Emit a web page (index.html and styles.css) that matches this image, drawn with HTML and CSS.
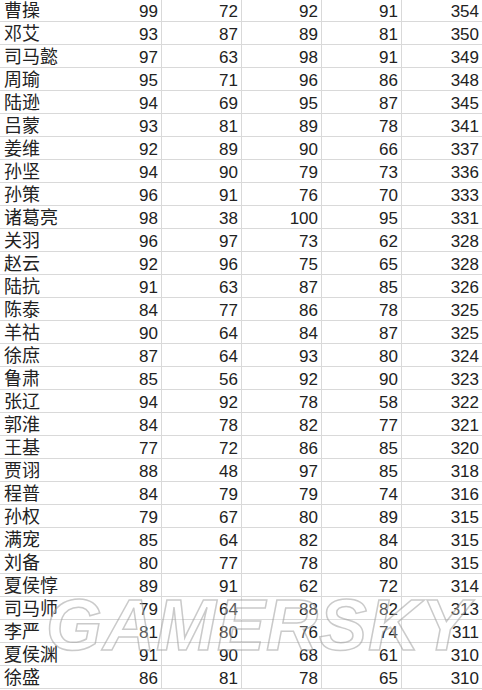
FILE: index.html
```html
<!DOCTYPE html>
<html lang="zh">
<head>
<meta charset="utf-8">
<title>武将数据</title>
<link rel="stylesheet" href="styles.css">
</head>
<body>
<div class="sheet">
  <div class="row first"><div class="name">曹操</div><div class="num">99</div><div class="num">72</div><div class="num">92</div><div class="num">91</div><div class="num last">354</div></div>
  <div class="row"><div class="name">邓艾</div><div class="num">93</div><div class="num">87</div><div class="num">89</div><div class="num">81</div><div class="num last">350</div></div>
  <div class="row"><div class="name">司马懿</div><div class="num">97</div><div class="num">63</div><div class="num">98</div><div class="num">91</div><div class="num last">349</div></div>
  <div class="row"><div class="name">周瑜</div><div class="num">95</div><div class="num">71</div><div class="num">96</div><div class="num">86</div><div class="num last">348</div></div>
  <div class="row"><div class="name">陆逊</div><div class="num">94</div><div class="num">69</div><div class="num">95</div><div class="num">87</div><div class="num last">345</div></div>
  <div class="row"><div class="name">吕蒙</div><div class="num">93</div><div class="num">81</div><div class="num">89</div><div class="num">78</div><div class="num last">341</div></div>
  <div class="row"><div class="name">姜维</div><div class="num">92</div><div class="num">89</div><div class="num">90</div><div class="num">66</div><div class="num last">337</div></div>
  <div class="row"><div class="name">孙坚</div><div class="num">94</div><div class="num">90</div><div class="num">79</div><div class="num">73</div><div class="num last">336</div></div>
  <div class="row"><div class="name">孙策</div><div class="num">96</div><div class="num">91</div><div class="num">76</div><div class="num">70</div><div class="num last">333</div></div>
  <div class="row"><div class="name">诸葛亮</div><div class="num">98</div><div class="num">38</div><div class="num">100</div><div class="num">95</div><div class="num last">331</div></div>
  <div class="row"><div class="name">关羽</div><div class="num">96</div><div class="num">97</div><div class="num">73</div><div class="num">62</div><div class="num last">328</div></div>
  <div class="row"><div class="name">赵云</div><div class="num">92</div><div class="num">96</div><div class="num">75</div><div class="num">65</div><div class="num last">328</div></div>
  <div class="row"><div class="name">陆抗</div><div class="num">91</div><div class="num">63</div><div class="num">87</div><div class="num">85</div><div class="num last">326</div></div>
  <div class="row"><div class="name">陈泰</div><div class="num">84</div><div class="num">77</div><div class="num">86</div><div class="num">78</div><div class="num last">325</div></div>
  <div class="row"><div class="name">羊祜</div><div class="num">90</div><div class="num">64</div><div class="num">84</div><div class="num">87</div><div class="num last">325</div></div>
  <div class="row"><div class="name">徐庶</div><div class="num">87</div><div class="num">64</div><div class="num">93</div><div class="num">80</div><div class="num last">324</div></div>
  <div class="row"><div class="name">鲁肃</div><div class="num">85</div><div class="num">56</div><div class="num">92</div><div class="num">90</div><div class="num last">323</div></div>
  <div class="row"><div class="name">张辽</div><div class="num">94</div><div class="num">92</div><div class="num">78</div><div class="num">58</div><div class="num last">322</div></div>
  <div class="row"><div class="name">郭淮</div><div class="num">84</div><div class="num">78</div><div class="num">82</div><div class="num">77</div><div class="num last">321</div></div>
  <div class="row"><div class="name">王基</div><div class="num">77</div><div class="num">72</div><div class="num">86</div><div class="num">85</div><div class="num last">320</div></div>
  <div class="row"><div class="name">贾诩</div><div class="num">88</div><div class="num">48</div><div class="num">97</div><div class="num">85</div><div class="num last">318</div></div>
  <div class="row"><div class="name">程普</div><div class="num">84</div><div class="num">79</div><div class="num">79</div><div class="num">74</div><div class="num last">316</div></div>
  <div class="row"><div class="name">孙权</div><div class="num">79</div><div class="num">67</div><div class="num">80</div><div class="num">89</div><div class="num last">315</div></div>
  <div class="row"><div class="name">满宠</div><div class="num">85</div><div class="num">64</div><div class="num">82</div><div class="num">84</div><div class="num last">315</div></div>
  <div class="row"><div class="name">刘备</div><div class="num">80</div><div class="num">77</div><div class="num">78</div><div class="num">80</div><div class="num last">315</div></div>
  <div class="row"><div class="name">夏侯惇</div><div class="num">89</div><div class="num">91</div><div class="num">62</div><div class="num">72</div><div class="num last">314</div></div>
  <div class="row"><div class="name">司马师</div><div class="num">79</div><div class="num">64</div><div class="num">88</div><div class="num">82</div><div class="num last">313</div></div>
  <div class="row"><div class="name">李严</div><div class="num">81</div><div class="num">80</div><div class="num">76</div><div class="num">74</div><div class="num last">311</div></div>
  <div class="row"><div class="name">夏侯渊</div><div class="num">91</div><div class="num">90</div><div class="num">68</div><div class="num">61</div><div class="num last">310</div></div>
  <div class="row"><div class="name">徐盛</div><div class="num">86</div><div class="num">81</div><div class="num">78</div><div class="num">65</div><div class="num last">310</div></div>
  <div class="watermark">GAMERSKY</div>
</div>
</body>
</html>
```

FILE: styles.css
```css
html, body {
  margin: 0;
  padding: 0;
  background: #ffffff;
  overflow: hidden;
}

.sheet {
  position: relative;
  width: 482px;
  height: 690px;
  overflow: hidden;
}

.row {
  display: grid;
  grid-template-columns: 82px 80px 80px 80px 80px 80px;
  height: 23px;
}

.row > div {
  box-sizing: border-box;
  height: 23px;
  border-right: 1px solid #d9d9d9;
  border-bottom: 1px solid #d9d9d9;
  white-space: nowrap;
  color: #222222;
}

.row.first {
  height: 22px;
}

.row.first > div {
  height: 22px;
}

.row > .name {
  font-family: "Noto Sans CJK SC", "Noto Sans", sans-serif;
  font-size: 18px;
  line-height: 19px;
  padding-top: 1px;
  padding-left: 4px;
  border-right: none;
}

.row.first > .name {
  padding-top: 0;
}

.num {
  font-family: "Liberation Sans", Arial, sans-serif;
  font-size: 17px;
  line-height: 19px;
  padding-top: 3px;
  padding-right: 3px;
  text-align: right;
}

.row.first > .num {
  padding-top: 2px;
}

.row > .last {
  border-right: none;
}

.watermark {
  position: absolute;
  left: 46px;
  top: 589px;
  font-family: "Liberation Sans", Arial, sans-serif;
  font-weight: bold;
  font-style: italic;
  font-size: 72px;
  line-height: 72px;
  letter-spacing: 1px;
  color: rgba(255, 255, 255, 0.25);
  -webkit-text-stroke: 1.5px rgba(150, 150, 150, 0.5);
  pointer-events: none;
}
```
